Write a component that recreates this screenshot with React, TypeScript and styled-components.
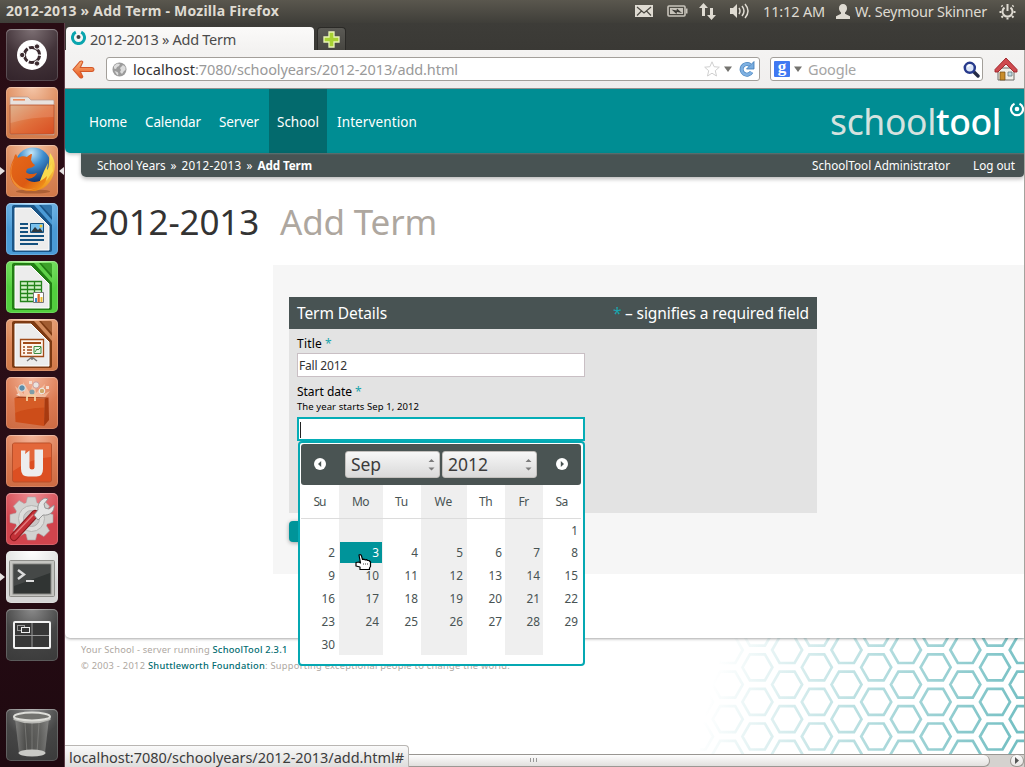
import React, { useLayoutEffect, useRef, useState } from "react";
import styled, { createGlobalStyle } from "styled-components";

const GlobalStyle = createGlobalStyle`
  * { box-sizing: border-box; }
  html, body { margin: 0; padding: 0; overflow: hidden; }
  body { font-family: "Noto Sans", "Open Sans", sans-serif; color: #3c3c3c; background: #fff; }
  svg { display: block; flex: none; }
`;

/* ---------- text that is tracked to a known measure ---------- */

const Measure = styled.span<{ $w: number; $size?: number; $weight?: number; $color?: string }>`
  display: inline-block;
  flex: none;
  width: ${(p) => p.$w}px;
  white-space: pre;
  ${(p) => p.$size && `font-size: ${p.$size}px;`}
  ${(p) => p.$weight && `font-weight: ${p.$weight};`}
  ${(p) => p.$color && `color: ${p.$color};`}
`;

type FitProps = { w: number; size?: number; weight?: number; color?: string; children: string };

function Fit({ w, size, weight, color, children }: FitProps) {
  const ref = useRef<HTMLSpanElement>(null);
  const [tracking, setTracking] = useState(0);
  useLayoutEffect(() => {
    const el = ref.current;
    if (!el) return;
    const natural = el.getBoundingClientRect().width;
    setTracking((t) => t + (w - natural) / Math.max(1, children.length));
  }, [w, children]);
  return (
    <Measure $w={w} $size={size} $weight={weight} $color={color}>
      <span ref={ref} style={{ letterSpacing: tracking }}>{children}</span>
    </Measure>
  );
}

/* ---------- desktop shell ---------- */

const Desktop = styled.div`
  width: 1025px;
  height: 767px;
  display: grid;
  grid-template: 23px 744px / 65px 960px;
  overflow: hidden;
`;

const TopPanel = styled.header`
  grid-column: 1 / 3;
  display: flex;
  align-items: flex-start;
  justify-content: space-between;
  padding: 0 9px 0 6px;
  background: linear-gradient(#5a574e, #3f3e39);
  color: #dfdbd2;
  font-size: 14.5px;
  line-height: 22px;
`;

const Indicators = styled.div`
  display: flex;
  align-items: center;
  height: 22px;
`;

const Gap = styled.span<{ $w: number }>`
  flex: none;
  width: ${(p) => p.$w}px;
`;

const Launcher = styled.aside`
  position: relative;
  display: flex;
  flex-direction: column;
  gap: 6px;
  padding: 6px 0 6px 6px;
  background: linear-gradient(#290c14, #2b0e17 45%, #1f0910);
  border-right: 1px solid #5f3f4a;
`;

const Tile = styled.div<{ $bg: string; $last?: boolean }>`
  position: relative;
  flex: none;
  width: 52px;
  height: 52px;
  border-radius: 5px;
  background: ${(p) => p.$bg};
  box-shadow: inset 0 0 0 1px rgba(255, 255, 255, 0.16), inset 0 1px 1px rgba(255, 255, 255, 0.25);
  ${(p) => p.$last && "margin-top: auto;"}
`;

const Pip = styled.i<{ $side: "left" | "right" }>`
  position: absolute;
  top: 22px;
  ${(p) => (p.$side === "left" ? "left: -6px; border-left: 5px solid #e6e1e1;" : "right: -6px; border-right: 5px solid #e6e1e1;")}
  border-top: 4px solid transparent;
  border-bottom: 4px solid transparent;
`;

/* ---------- firefox window ---------- */

const Window = styled.main`
  position: relative;
  display: flex;
  flex-direction: column;
  height: 744px;
  border-right: 1px solid #a5a29d;
`;

const TabStrip = styled.div`
  height: 27px;
  flex: none;
  display: flex;
  align-items: flex-end;
  gap: 3px;
  padding-left: 1px;
  margin-right: -1px;
  background: linear-gradient(#3d3c38, #3a3935);
`;

const Tab = styled.div`
  display: flex;
  align-items: flex-start;
  gap: 4px;
  width: 248px;
  height: 23px;
  padding: 3px 0 0 5px;
  border-radius: 4px 4px 0 0;
  background: linear-gradient(#fbfaf9, #f3f2f1);
  color: #4b4b4b;
  font-size: 14.5px;
  line-height: 18px;
`;

const NewTab = styled.div`
  display: grid;
  place-items: center;
  width: 29px;
  height: 23px;
  border: 1px solid #2b2a27;
  border-bottom: 0;
  border-radius: 4px 4px 0 0;
  background: linear-gradient(#5b5a55, #474641);
`;

const NavBar = styled.div`
  height: 39px;
  flex: none;
  display: flex;
  align-items: center;
  padding: 0 6px 0 7px;
  border-bottom: 1px solid #95928f;
  background: linear-gradient(#f4f3f2, #f0eeed);
`;

const AddressField = styled.div<{ $w: number; $ml: number; $pl: number }>`
  display: flex;
  align-items: center;
  flex: none;
  width: ${(p) => p.$w}px;
  height: 24px;
  margin-left: ${(p) => p.$ml}px;
  padding-left: ${(p) => p.$pl}px;
  border: 1px solid #a39f9a;
  border-radius: 3px;
  background: #fff;
  font-size: 14.5px;
  line-height: 22px;
`;

/* ---------- schooltool page ---------- */

const Viewport = styled.div`
  flex: 1;
  display: flex;
  flex-direction: column;
  background: #fff;
  overflow: hidden;
`;

const Sheet = styled.div`
  position: relative;
  z-index: 1;
  height: 549px;
  flex: none;
  background: #fff;
  border-bottom-left-radius: 5px;
  box-shadow: 0 1px 3px rgba(0, 0, 0, 0.35);
`;

const Masthead = styled.div`
  position: relative;
  height: 64px;
  display: flex;
  justify-content: space-between;
  padding-left: 16px;
  background: #008d93;
  border-bottom-left-radius: 5px;
  box-shadow: 0 1px 4px rgba(0, 0, 0, 0.3);
`;

const MainNav = styled.nav`
  display: flex;
  gap: 2px;
`;

const NavItem = styled.a<{ $active?: boolean }>`
  padding: 22px 8px 0;
  color: #fff;
  font-size: 13.5px;
  line-height: 22px;
  background: ${(p) => (p.$active ? "#036a6d" : "transparent")};
`;

const Brand = styled.div`
  display: flex;
  width: 194px;
  padding-top: 8px;
  font-size: 35.5px;
  line-height: 48px;
  overflow: hidden;
`;

const BrandMark = styled.svg`
  margin: 4px 0 0 8px;
`;

const Crumbs = styled.div`
  position: relative;
  height: 24px;
  margin-left: 16px;
  display: flex;
  justify-content: space-between;
  padding: 0 9px 0 16px;
  border-radius: 0 0 4px 5px;
  background: linear-gradient(#5c7676, #485353 2px);
  box-shadow: 0 2px 4px rgba(0, 0, 0, 0.28);
  color: #fff;
  font-size: 11.7px;
  line-height: 24px;
`;

const CrumbGroup = styled.div<{ $gap: number }>`
  display: flex;
  gap: ${(p) => p.$gap}px;
`;

const PageTitle = styled.h1`
  display: flex;
  gap: 21px;
  height: 88px;
  margin: 0;
  padding: 21px 0 0 24px;
  font-size: 35px;
  line-height: 48px;
  font-weight: 400;
`;

const FormArea = styled.section`
  height: 309px;
  margin-left: 208px;
  padding: 32px 16px 0;
  background: #f6f6f6;
`;

const Fieldset = styled.div`
  width: 528px;
  height: 216px;
  background: #e3e3e3;
`;

const Legend = styled.div`
  display: flex;
  justify-content: space-between;
  height: 32px;
  padding: 0 8px;
  background: #485353;
  color: #fff;
  font-size: 15.5px;
  line-height: 32px;
`;

const FieldBody = styled.div`
  padding: 5px 8px 0;
`;

const FieldLabel = styled.div<{ $mt?: number }>`
  display: flex;
  gap: 3px;
  height: 19px;
  margin-top: ${(p) => p.$mt ?? 0}px;
  color: #000;
  font-size: 12px;
  line-height: 20px;
`;

const Hint = styled.div`
  height: 16px;
  color: #000;
  font-size: 9.5px;
  line-height: 12px;
`;

const Input = styled.div<{ $focus?: boolean }>`
  position: relative;
  display: flex;
  width: 288px;
  height: 24px;
  padding-left: 1px;
  border: ${(p) => (p.$focus ? "2px solid #05adb6" : "1px solid #c9bfc4")};
  background: #fff;
  color: #333;
  font-size: 12px;
  line-height: 23px;
`;

const Caret = styled.span`
  width: 1px;
  height: 16px;
  margin-top: 3px;
  background: #222;
`;

const SubmitButton = styled.div`
  width: 60px;
  height: 21px;
  margin-top: 8px;
  border-radius: 4px;
  background: #009499;
  box-shadow: 0 1px 4px rgba(0, 0, 0, 0.35);
`;

/* ---------- date picker ---------- */

const Picker = styled.div`
  position: absolute;
  z-index: 5;
  top: 22px;
  left: -1px;
  width: 287px;
  height: 225px;
  padding: 1px;
  border: 2px solid #05a8b2;
  border-radius: 4px;
  background: #fff;
  color: #485353;
`;

const PickerHead = styled.div`
  display: flex;
  align-items: center;
  width: 280px;
  height: 41px;
  padding: 0 13px 1px;
  border-radius: 3px;
  background: #4a5453;
`;

const Select = styled.div`
  display: flex;
  align-items: center;
  justify-content: space-between;
  width: 95px;
  height: 27px;
  padding: 0 4px 0 5px;
  border: 1px solid #c3c0bd;
  border-radius: 3px;
  background: linear-gradient(#f7f7f7, #d9d9d9);
  color: #3c3c3c;
  font-size: 17.5px;
  line-height: 25px;
`;

const Grid = styled.div`
  display: grid;
  grid-template-columns: 38px 44px 38px 46px 38px 38px 38px;
  grid-template-rows: 34px 22px 23px 23px 23px 23px 22px;
  width: 280px;
`;

const DayName = styled.div<{ $alt: boolean }>`
  border-bottom: 1px solid #dcdcdc;
  background: ${(p) => (p.$alt ? "#efefef" : "transparent")};
  text-align: center;
  font-size: 12px;
  line-height: 33px;
  padding-right: 1px;
`;

const Day = styled.div<{ $alt: boolean; $on: boolean; $end: number }>`
  padding-right: ${(p) => (p.$on ? 3 : p.$end)}px;
  background: ${(p) => (p.$on ? "#00949a" : p.$alt ? "#efefef" : "transparent")};
  border: solid #efefef;
  border-width: ${(p) => (p.$on ? "1px" : "0")};
  color: ${(p) => (p.$on ? "#fff" : "#485353")};
  text-align: right;
  font-size: 11.8px;
  line-height: ${(p) => (p.$on ? 21 : 23)}px;
`;

const Pointer = styled.svg`
  position: absolute;
  z-index: 8;
  left: 290px;
  top: 530px;
`;

/* ---------- footer ---------- */

const Footer = styled.footer`
  flex: none;
  height: 116px;
  display: flex;
  justify-content: space-between;
  padding-left: 16px;
  color: #aea79f;
  font-size: 9.3px;
  line-height: 16px;
`;

const Credits = styled.div`
  padding-top: 4px;
`;

const CreditLine = styled.div`
  display: flex;
  height: 16px;
`;

const ScrollBar = styled.div`
  display: flex;
  height: 13px;
  flex: none;
  border-top: 1px solid #999692;
  background: #d5d2cf;
`;

const Thumb = styled.div`
  display: grid;
  place-items: center;
  width: 925px;
  padding-left: 12px;
  border: 1px solid #9c9894;
  border-top: 0;
  border-radius: 0 7px 7px 0;
  background: linear-gradient(#fdfdfd, #e2e0de);
`;

const ScrollArrow = styled.div`
  display: grid;
  place-items: center;
  width: 14px;
  margin-left: auto;
  border: 1px solid #9c9894;
  border-top: 0;
  border-radius: 7px;
  background: linear-gradient(#fbfbfb, #e6e4e2);
`;

const StatusTip = styled.div`
  position: absolute;
  z-index: 9;
  left: 0;
  bottom: 0;
  width: 344px;
  height: 22px;
  padding-left: 4px;
  border: 1px solid #b9b6b3;
  border-width: 1px 1px 0 0;
  border-radius: 0 4px 0 0;
  background: linear-gradient(#fafafa, #dedddc);
  color: #3c3c3c;
  font-size: 14.5px;
  line-height: 22px;
`;

/* ---------- data ---------- */

const NAV: [string, number][] = [["Home", 38], ["Calendar", 56], ["Server", 40], ["School", 42], ["Intervention", 80]];
const DAYS: [string, number][] = [["Su", 12], ["Mo", 17], ["Tu", 13], ["We", 18], ["Th", 13], ["Fr", 10], ["Sa", 12]];
const CELLS = Array.from({ length: 42 }, (_, i) => (i >= 6 && i < 36 ? i - 5 : 0));
const DAY_ENDS = [4, 4, 3, 4, 3, 3, 3];

/* ---------- drawings ---------- */

const orange = "radial-gradient(circle at 50% 0, #f4c6a8, #dc8758 55%, #cf7747)";

const DashIcon = () => (
  <svg width="52" height="52" viewBox="0 0 52 52">
    <circle cx="26" cy="26" r="15" fill="#fff" />
    <circle cx="26" cy="26" r="7.6" fill="none" stroke="#3c2b30" strokeWidth="3" strokeDasharray="14.3 1.6" strokeDashoffset="-.8" />
    <g fill="#3c2b30" stroke="#fff" strokeWidth="1">
      <circle cx="16.2" cy="26" r="2.7" />
      <circle cx="31" cy="17.5" r="2.7" />
      <circle cx="31" cy="34.5" r="2.7" />
    </g>
  </svg>
);

const FilesIcon = () => (
  <svg width="52" height="52" viewBox="0 0 52 52">
    <defs>
      <linearGradient id="fold" x1="0" y1="0" x2="1" y2="1">
        <stop offset="0" stopColor="#d9a67c" /><stop offset=".5" stopColor="#e0703c" /><stop offset="1" stopColor="#d94e22" />
      </linearGradient>
    </defs>
    <path d="M4 47V11q0-1 1-1h17l3 3h22q1 0 1 1v34z" fill="#e8e2de" stroke="#b8968a" strokeWidth=".7" />
    <path d="M7 12h12v1.6H7z" fill="#e98a5b" />
    <path d="M4 18h44v28q0 1-1 1H5q-1 0-1-1z" fill="url(#fold)" stroke="#b8502c" strokeWidth=".8" />
    <path d="M4.500 18.500h43V30Q24 30 4.500 36z" fill="#fff" opacity=".14" />
  </svg>
);

const FirefoxIcon = () => (
  <svg width="52" height="52" viewBox="0 0 52 52">
    <defs>
      <radialGradient id="sea" cx=".45" cy=".15" r=".85">
        <stop offset="0" stopColor="#c3e6f8" /><stop offset=".4" stopColor="#3f8fd0" /><stop offset="1" stopColor="#0c2d6c" />
      </radialGradient>
      <linearGradient id="fur" x1="0" y1="0" x2="1" y2="1">
        <stop offset="0" stopColor="#e66a1c" /><stop offset=".6" stopColor="#dc5a12" /><stop offset="1" stopColor="#f7a61c" />
      </linearGradient>
      <linearGradient id="tail" x1="0" y1="0" x2="0" y2="1">
        <stop offset="0" stopColor="#fbe75c" /><stop offset="1" stopColor="#ef8f17" />
      </linearGradient>
    </defs>
    <ellipse cx="27" cy="46.500" rx="17" ry="2" fill="#85431d" opacity=".5" />
    <circle cx="27" cy="20.500" r="18" fill="url(#sea)" />
    <path d="M44 8c4 5 6 12 4 19-2 11-11 19-22 19l-1-6c8-1 15-7 17-15 1-5 1-11 2-17z" fill="url(#tail)" />
    <path d="M46 18l-5 7 1-7-4 8-5 12 8-3 6-9z" fill="#f9d94c" />
    <path d="M8 13c0-2 1-3 2-4l2 4c3-2 6-2 9-1 1-1 3-3 5-3l-1 6c1 2 2 4 4 5-1 2-5 3-8 4l-1 3c2 3 8 2 11 1-2 4-7 7-12 5 6 6 16 5 22-2-1 9-8 15-17 15C11 46 4 37 4 28c0-6 2-11 4-15z" fill="url(#fur)" />
    <path d="M8 16c-4 8-4 17 3 23 5 5 13 6 19 4-9 5-19 2-23-6-4-7-3-15 1-21z" fill="#f6a442" opacity=".7" />
  </svg>
);

type OfficeProps = { dark: string; mid: string; children: React.ReactNode };
const OfficeIcon = ({ dark, mid, children }: OfficeProps) => (
  <svg width="52" height="52" viewBox="0 0 52 52">
    <path d="M8 2h36q2 0 2 2v43q0 2-2 2H8q-2 0-2-2V4q0-2 2-2z" fill={dark} />
    <path d="M28 2h5l13 15v5z" fill={mid} />
    <path d="M35 2h9q2 0 2 2v10z" fill={mid} opacity=".45" />
    <path d="M9 5h16l18 18v24H9z" fill="#ececec" stroke="#fff" strokeWidth="1" />
    {children}
  </svg>
);

const WriterArt = () => (
  <g>
    <path d="M14 21h8M14 25h8M14 29h8M14 33h24M14 37h24M14 41h18" stroke="#15517f" strokeWidth="1.8" />
    <path d="M24.500 20.500h13v9h-13z" fill="#7ac1ee" stroke="#15517f" />
    <path d="M25 29l4-5 3 3 2-2 3 4z" fill="#30383d" /><circle cx="35" cy="23" r="1.500" fill="#f0c838" />
  </g>
);

const CalcArt = () => (
  <g>
    <path d="M14.500 20.500h21v20h-21zM14.500 24.500h21M14.500 28.500h21M14.500 32.500h21M14.500 36.500h21M21.500 20.500v20M28.500 20.500v20" fill="#d3f0c8" stroke="#23831a" strokeWidth="1.3" />
    <path d="M27.500 31.500h10v10h-10z" fill="#fff" stroke="#777" />
    <path d="M29 37h2v4h-2z" fill="#3a86c8" /><path d="M31.500 33h2.300v8h-2.300z" fill="#d8672a" /><path d="M34.500 36h2v5h-2z" fill="#e7b92c" />
  </g>
);

const ImpressArt = () => (
  <g>
    <path d="M14.500 20.500h23v17h-23z" fill="#fff5ec" stroke="#a04a17" strokeWidth="1.300" />
    <path d="M17 24h18" stroke="#a04a17" strokeWidth="2" />
    <path d="M17 28h2m2 0h5M17 31h2m2 0h5M17 34h2m2 0h5" stroke="#a04a17" strokeWidth="1.700" />
    <path d="M28 27.500h7v7h-7z" fill="#e7f5e3" stroke="#3d8b42" /><path d="M29 33l2-3 1 1 3-3" fill="none" stroke="#3d8b42" />
    <path d="M26 38l-5 4M26 38l5 4M26 38v3" stroke="#777" strokeWidth="1.500" />
  </g>
);

const SoftwareIcon = () => (
  <svg width="52" height="52" viewBox="0 0 52 52">
    <path d="M13 20L9 9l9 8-1-12 7 11 4-13 2 13 9-9-3 11 8-4-7 9z" fill="#ffe1c8" opacity=".55" />
    <circle cx="16" cy="11" r="3.300" fill="#5d8ca8" stroke="#e6e9e8" /><circle cx="30" cy="8" r="3.200" fill="#e9e3df" stroke="#c99" />
    <circle cx="36" cy="14" r="2.800" fill="#cfa96b" stroke="#eee" /><circle cx="26" cy="15" r="2.500" fill="#7f9ea8" />
    <path d="M23 4h3v3h-3zM40 9h3v3h-3zM10 18l3-2 1 3z" fill="#f4ddd0" />
    <path d="M8.500 21l30 .5-.5 27.500L9.500 45z" fill="#cd4d19" /><path d="M38.500 21.500l4-1 .5 22.500-5 6z" fill="#a83a10" />
    <path d="M8.500 21l4-1.500 30 1-4 1z" fill="#a8431c" />
    <path d="M8.500 21l30 .5-.2 9Q20 31 9 36z" fill="#f08b50" opacity=".25" />
    <path d="M21 24v-4q0-1.500 1.500-1.500h5q1.500 0 1.500 1.500v4" fill="none" stroke="#f3cf9f" strokeWidth="1.800" />
  </svg>
);

const UbuntuOneIcon = () => (
  <svg width="52" height="52" viewBox="0 0 52 52">
    <rect x="6.500" y="8" width="39" height="39" rx="2" fill="#dc4f22" stroke="#b9502b" />
    <path d="M7 8.500h38V22Q25 23 7 36z" fill="#f19468" opacity=".35" />
    <path d="M15 15.500h4.500l-.5 3.500 4.500-3.500v17q0 2 2.500 2t2.500-2V14.500H37V34q0 7.500-6.500 7.500H22q-7 0-7-7.500z" fill="#ededed" />
  </svg>
);

const SettingsIcon = () => (
  <svg width="52" height="52" viewBox="0 0 52 52">
    <g fill="#d2d2d0" stroke="#a9a6a6" strokeWidth=".6">
      {[0, 45, 90, 135].map((a) => (
        <path key={a} d="M21.500 4h8l1.500 6v31l-1.500 6h-8L20 41V10z" transform={`rotate(${a} 25.500 25.500)`} />
      ))}
    </g>
    <circle cx="25.500" cy="25.500" r="16.500" fill="#d2d2d0" />
    <circle cx="25.500" cy="25.500" r="13" fill="#dededc" stroke="#b5b5b3" />
    <circle cx="25.500" cy="25.500" r="8" fill="#c9c6c5" stroke="#b0aeae" />
    <path d="M8 44L29 21" stroke="#8c181d" strokeWidth="8" strokeLinecap="round" />
    <path d="M8 44L29 21" stroke="#c33037" strokeWidth="6" strokeLinecap="round" />
    <path d="M9 41L27 22" stroke="#e47a7c" strokeWidth="1.400" strokeLinecap="round" />
    <path d="M28 22l4-5c-1-5 2-10 7-12l3 1-4 5 1 4 4 1 5-4c1 6-4 11-11 10l-5 5z" fill="#e4e4e4" stroke="#8f8f8f" strokeWidth=".9" />
  </svg>
);

const TerminalIcon = () => (
  <svg width="52" height="52" viewBox="0 0 52 52">
    <rect x="3.500" y="9.500" width="45" height="36" rx="1" fill="#c4c4c0" stroke="#8e8e8a" />
    <rect x="7" y="13" width="38" height="30" fill="#303433" stroke="#8a8a87" />
    <path d="M8 14h36v8L8 35z" fill="#fff" opacity=".1" />
    <path d="M12 19l6 4.500-6 4.500" fill="none" stroke="#dcdcdc" strokeWidth="2.400" /><path d="M20 30h8" stroke="#dcdcdc" strokeWidth="2" />
  </svg>
);

const WorkspacesIcon = () => (
  <svg width="52" height="52" viewBox="0 0 52 52">
    <rect x="8" y="13" width="36" height="26" rx="1" fill="#373737" stroke="#f2f2f2" strokeWidth="2" />
    <path d="M26 14v24M9 26.500h34" stroke="#9a9a9a" />
    <rect x="11.500" y="16.500" width="7" height="5" fill="none" stroke="#999" />
    <rect x="15.500" y="18.500" width="8" height="5" fill="#373737" stroke="#eee" />
  </svg>
);

const TrashIcon = () => (
  <svg width="52" height="52" viewBox="0 0 52 52">
    <defs>
      <linearGradient id="can"><stop offset="0" stopColor="#8d8d8b" /><stop offset=".3" stopColor="#52524f" /><stop offset=".75" stopColor="#696966" /><stop offset="1" stopColor="#91918f" /></linearGradient>
    </defs>
    <path d="M9 9l4 35q13 6 26 0l4-35z" fill="url(#can)" opacity=".75" />
    <path d="M19 14l2 30M26 14v31M33 14l-2 30" stroke="#8b8b88" strokeWidth=".6" />
    <ellipse cx="26" cy="44" rx="13.500" ry="3.500" fill="#c9c9c5" />
    <path d="M7.500 8v3q18.500 7 37 0V8z" fill="#b9b9b5" />
    <ellipse cx="26" cy="7.500" rx="18" ry="4" fill="#73736f" stroke="#deded9" strokeWidth="2" />
  </svg>
);

const MailIcon = () => (
  <svg width="18" height="14" viewBox="0 0 18 14">
    <path d="M0 1h18v12H0z" fill="#dfdbd2" />
    <path d="M2 3l7 6 7-6M2 11.500L6.500 7M16 11.500L11.500 7" fill="none" stroke="#4a4841" strokeWidth="1.200" />
  </svg>
);
const BatteryIcon = () => (
  <svg width="21" height="14" viewBox="0 0 21 14">
    <rect x="1" y="2" width="17" height="10" rx="1" fill="none" stroke="#c7c3ba" strokeWidth="1.600" />
    <path d="M3 4h13v6H3z" fill="#c7c3ba" /><path d="M19 4.500h1.500v5H19z" fill="#c7c3ba" />
    <path d="M4.500 5.500l5 1 .5-2 5 4.500-5-1-.5 2z" fill="#3d3c37" />
  </svg>
);
const NetworkIcon = () => (
  <svg width="17" height="17" viewBox="0 0 17 17" fill="#dfdbd2">
    <path d="M4.500 0L9 5H6v8H3V5H0zM12.500 17L8 12h3V5h3v7h3z" />
  </svg>
);
const VolumeIcon = () => (
  <svg width="20" height="16" viewBox="0 0 20 16" fill="#dfdbd2">
    <path d="M0 5h3l4-4v14l-4-4H0z" />
    <path d="M9 5q2 3 0 6M12 3q4 5 0 10M15 1q6 7 0 14" fill="none" stroke="#dfdbd2" strokeWidth="1.500" />
  </svg>
);
const PersonIcon = () => (
  <svg width="14" height="15" viewBox="0 0 14 15">
    <path d="M7 0c2.500 0 4 1.800 4 4.200 0 2-1 3.300-2 4.300v1.300l5 2.500V15H0v-2.700l5-2.500V8.500C4 7.500 3 6.200 3 4.200 3 1.800 4.500 0 7 0z" fill="#dfdbd2" />
  </svg>
);
const GearIcon = () => (
  <svg width="17" height="17" viewBox="0 0 17 17" fill="none" stroke="#dfdbd2">
    <path d="M5.500 4.600a5 5 0 1 0 6 0" strokeWidth="2" /><path d="M8.500 1v7" strokeWidth="2" />
    <path d="M3.500 3.500L2.500 2.500M13.500 3.500l1-1M2.500 9H.5M14.500 9h2M4 13l-1.500 1.500M13 13l1.500 1.500M8.500 14.500v2" strokeWidth="2" />
  </svg>
);

const Favicon = () => (
  <svg width="15" height="15" viewBox="0 0 15 15">
    <path d="M4.800 2.200a6 6 0 1 0 5.400 0" fill="none" stroke="#0aa5ae" strokeWidth="3" />
    <circle cx="7.500" cy="7" r="2" fill="#444" />
  </svg>
);
const PlusIcon = () => (
  <svg width="17" height="17" viewBox="0 0 17 17">
    <path d="M6 1h5v5h5v5h-5v5H6v-5H1V6h5z" fill="#a8d233" stroke="#e9f5b5" strokeWidth="1.300" />
  </svg>
);
const BackIcon = () => (
  <svg width="23" height="19" viewBox="0 0 23 19">
    <defs><linearGradient id="bk" x1="0" y1="0" x2="0" y2="1"><stop offset="0" stopColor="#f9b47c" /><stop offset="1" stopColor="#e8561c" /></linearGradient></defs>
    <path d="M1 9.500L8 1.500q2-1.200 2.800.5L8.300 7.500H20q2 .2 2 2t-2 2H8.300l2.500 5.300Q10 18.800 8 17.500z" fill="url(#bk)" stroke="#d4582a" strokeWidth="1.100" />
  </svg>
);
const GlobeIcon = () => (
  <svg width="15" height="15" viewBox="0 0 15 15">
    <circle cx="7.500" cy="7.500" r="7" fill="#9b9b9b" />
    <path d="M2 4l3-2.500 3 .5-1 2-2 1-1 2-2-.5zM8 6l3-3 2.500 2v3L12 9l-2 3-2-2 1-2zM2.500 9l3 1 1 2-1 1.500z" fill="#dcdcdc" />
  </svg>
);
const StarIcon = () => (
  <svg width="16" height="16" viewBox="0 0 16 16">
    <path d="M8 .8l2.100 4.900 5.200.5-4 3.500 1.200 5.300L8 12.200 3.500 15l1.200-5.300-4-3.500 5.200-.5z" fill="#fff" stroke="#d0d0d0" />
  </svg>
);
const DownArrow = () => (
  <svg width="8" height="6" viewBox="0 0 8 6"><path d="M0 .5h8L4 6z" fill="#74736f" /></svg>
);
const ReloadIcon = () => (
  <svg width="17" height="16" viewBox="0 0 17 16">
    <path d="M12 4A5.300 5.300 0 1 0 13.500 11" fill="none" stroke="#4c86bf" strokeWidth="4" />
    <path d="M12 4A5.300 5.300 0 1 0 13.500 11" fill="none" stroke="#7fb1e2" strokeWidth="2.600" />
    <path d="M16 .5v7.500H8.500z" fill="#79ade0" stroke="#3c79b5" strokeWidth=".8" />
  </svg>
);
const GoogleBox = styled.span`
  width: 16px;
  height: 16px;
  border-radius: 1px;
  background: #4079f2;
  color: #fff;
  font: 700 17px/12px "Liberation Serif", serif;
  text-align: center;
`;
const SearchIcon = () => (
  <svg width="17" height="17" viewBox="0 0 17 17">
    <path d="M10.500 10.500l4.500 4.500" stroke="#252b45" strokeWidth="3.400" strokeLinecap="round" />
    <circle cx="6.800" cy="6.800" r="5" fill="#dbe5f7" stroke="#273a8c" strokeWidth="2.500" />
    <path d="M4.500 6a3 3 0 0 1 3-2" fill="none" stroke="#fff" strokeWidth="1.300" />
  </svg>
);
const HomeIcon = () => (
  <svg width="24" height="24" viewBox="0 0 24 24">
    <path d="M4 11h16v12H4z" fill="#f1efe9" stroke="#6f6d68" />
    <path d="M12 1L1 12.500V15h3l8-8 8 8h3v-2.500z" fill="#cf4a4f" stroke="#9c2027" strokeWidth=".9" />
    <path d="M6 15h5v8H6z" fill="#c88d2b" stroke="#714a12" strokeWidth=".7" /><path d="M14 15h4v4h-4z" fill="#bdd9e3" stroke="#68787c" strokeWidth=".8" />
  </svg>
);

const CircleArrow = ({ flip }: { flip?: boolean }) => (
  <svg width="12" height="12" viewBox="0 0 12 12">
    <circle cx="6" cy="6" r="6" fill="#fff" />
    <path d={flip ? "M4.800 3v6L8 6z" : "M7.200 3v6L4 6z"} fill="#4a5453" />
  </svg>
);
const Spinner = () => (
  <svg width="7" height="13" viewBox="0 0 7 13" fill="#7b7b7b"><path d="M3.500 1L6.500 4h-6zM3.500 12.500l-3-3h6z" /></svg>
);

function Honeycomb() {
  const cells: string[] = [];
  for (let c = -2; c <= 9; c++) {
    for (let r = -1; r <= 4; r++) {
      const x = 57.400 + c * 29.700;
      const y = 29.300 + r * 34.600 + (c % 2 ? -17.300 : 0);
      cells.push(`M${x - 15} ${y}l7.500 -13h15l7.500 13l-7.500 13h-15z`);
    }
  }
  return (
    <svg width="324" height="116" viewBox="0 0 324 116">
      <defs>
        <linearGradient id="fade" gradientUnits="userSpaceOnUse" x1="12" y1="45" x2="330" y2="125">
          <stop offset="0" stopColor="#1c979d" stopOpacity="0" />
          <stop offset=".35" stopColor="#1c979d" stopOpacity=".24" />
          <stop offset="1" stopColor="#1c979d" stopOpacity=".65" />
        </linearGradient>
      </defs>
      <path d={cells.join("")} fill="none" stroke="url(#fade)" strokeWidth="2.700" />
    </svg>
  );
}

/* ---------- page ---------- */

function DatePicker() {
  return (
    <Picker>
      <PickerHead>
        <CircleArrow />
        <Gap $w={19} />
        <Select><Fit w={30}>Sep</Fit><Spinner /></Select>
        <Gap $w={2} />
        <Select><Fit w={40}>2012</Fit><Spinner /></Select>
        <Gap $w={19} />
        <CircleArrow flip />
      </PickerHead>
      <Grid>
        {DAYS.map(([d, w], i) => <DayName key={d} $alt={i % 2 === 1 && i < 6}><Fit w={w}>{d}</Fit></DayName>)}
        {CELLS.map((n, i) => (
          <Day key={i} $alt={i % 7 % 2 === 1} $on={n === 3} $end={DAY_ENDS[i % 7]}>
            {n ? <Fit w={n > 9 ? 13.600 : 6.800}>{String(n)}</Fit> : null}
          </Day>
        ))}
      </Grid>
    </Picker>
  );
}

export default function App() {
  return (
    <Desktop>
      <GlobalStyle />
      <TopPanel>
        <Fit w={273} size={14} weight={700}>2012-2013 » Add Term - Mozilla Firefox</Fit>
        <Indicators>
          <MailIcon /><Gap $w={14} /><BatteryIcon /><Gap $w={11} /><NetworkIcon /><Gap $w={14} /><VolumeIcon />
          <Gap $w={13} /><Fit w={62}>11:12 AM</Fit><Gap $w={11} /><PersonIcon /><Gap $w={5} />
          <Fit w={132}>W. Seymour Skinner</Fit><Gap $w={12} /><GearIcon />
        </Indicators>
      </TopPanel>

      <Launcher>
        <Tile $bg="radial-gradient(circle at 50% 0, #7d7074, #43343a 50%, #32232a)"><DashIcon /></Tile>
        <Tile $bg={orange}><FilesIcon /></Tile>
        <Tile $bg={orange}><FirefoxIcon /><Pip $side="left" /><Pip $side="right" /></Tile>
        <Tile $bg="radial-gradient(circle at 50% 0, #9fd2f5, #4a9ad6 60%)"><OfficeIcon dark="#1a5486" mid="#4b9bd6"><WriterArt /></OfficeIcon></Tile>
        <Tile $bg="radial-gradient(circle at 50% 0, #a5f58c, #52cf3e 60%)"><OfficeIcon dark="#217d13" mid="#5fd148"><CalcArt /></OfficeIcon></Tile>
        <Tile $bg={orange}><OfficeIcon dark="#7d3a12" mid="#d18a5c"><ImpressArt /></OfficeIcon></Tile>
        <Tile $bg="radial-gradient(circle at 50% 0, #f5b79c, #db7a52 55%, #cc6a42)"><SoftwareIcon /></Tile>
        <Tile $bg="radial-gradient(circle at 50% 0, #f5b79c, #db7a52 55%, #cc6a42)"><UbuntuOneIcon /></Tile>
        <Tile $bg="radial-gradient(circle at 50% 0, #ee8c92, #d1444d 60%)"><SettingsIcon /></Tile>
        <Tile $bg="radial-gradient(circle at 50% 0, #fff, #d5d5d5 70%)"><TerminalIcon /><Pip $side="left" /></Tile>
        <Tile $bg="radial-gradient(circle at 50% 0, #8a8a8a, #464646 50%, #3a3a3a)"><WorkspacesIcon /></Tile>
        <Tile $last $bg="radial-gradient(circle at 50% 0, #8a8a8a, #464646 50%, #3a3a3a)"><TrashIcon /></Tile>
      </Launcher>

      <Window>
        <TabStrip>
          <Tab><Favicon /><Fit w={146}>2012-2013 » Add Term</Fit></Tab>
          <NewTab><PlusIcon /></NewTab>
        </TabStrip>
        <NavBar>
          <BackIcon />
          <AddressField $w={654} $ml={11} $pl={5}>
            <GlobeIcon /><Gap $w={6} />
            <Fit w={62} color="#333">localhost</Fit><Fit w={263} color="#999">:7080/schoolyears/2012-2013/add.html</Fit>
            <Gap $w={246} /><StarIcon /><Gap $w={4} /><DownArrow /><Gap $w={6} /><ReloadIcon />
          </AddressField>
          <AddressField $w={213} $ml={10} $pl={3}>
            <GoogleBox>g</GoogleBox><Gap $w={4} /><DownArrow /><Gap $w={6} />
            <Fit w={48} color="#a5a5a5">Google</Fit><Gap $w={107} /><SearchIcon />
          </AddressField>
          <Gap $w={11} /><HomeIcon />
        </NavBar>

        <Viewport>
          <Sheet>
            <Masthead>
              <MainNav>
                {NAV.map(([label, w]) => <NavItem key={label} $active={label === "School"}><Fit w={w}>{label}</Fit></NavItem>)}
              </MainNav>
              <Brand>
                <Fit w={106} weight={400} color="#d5e2df">school</Fit><Fit w={65} weight={500} color="#fff">tool</Fit>
                <BrandMark width="16" height="16" viewBox="0 0 16 16">
                  <path d="M5.500 2.700a6 6 0 1 0 5 0" fill="none" stroke="#fff" strokeWidth="2.200" /><circle cx="8" cy="8" r="2.300" fill="#fff" />
                </BrandMark>
              </Brand>
            </Masthead>
            <Crumbs>
              <CrumbGroup $gap={5}>
                <Fit w={68.500}>School Years</Fit><Fit w={6}>»</Fit><Fit w={60}>2012-2013</Fit><Fit w={6}>»</Fit><Fit w={54.500} weight={700}>Add Term</Fit>
              </CrumbGroup>
              <CrumbGroup $gap={23}><Fit w={138}>SchoolTool Administrator</Fit><Fit w={42}>Log out</Fit></CrumbGroup>
            </Crumbs>
            <PageTitle><Fit w={170} color="#333">2012-2013</Fit><Fit w={157} color="#aea79f">Add Term</Fit></PageTitle>
            <FormArea>
              <Fieldset>
                <Legend>
                  <Fit w={90}>Term Details</Fit>
                  <span><Fit w={12} color="#19a5ad">* </Fit><Fit w={184}>– signifies a required field</Fit></span>
                </Legend>
                <FieldBody>
                  <FieldLabel><Fit w={25}>Title</Fit><Fit w={6} color="#19a5ad">*</Fit></FieldLabel>
                  <Input><Fit w={48}>Fall 2012</Fit></Input>
                  <FieldLabel $mt={5}><Fit w={55}>Start date</Fit><Fit w={6} color="#19a5ad">*</Fit></FieldLabel>
                  <Hint><Fit w={122}>The year starts Sep 1, 2012</Fit></Hint>
                  <Input $focus><Caret /><DatePicker /></Input>
                </FieldBody>
              </Fieldset>
              <SubmitButton />
            </FormArea>
          </Sheet>
          <Footer>
            <Credits>
              <CreditLine><Fit w={131.500}>Your School - server running </Fit><Fit w={75} weight={500} color="#006b70">SchoolTool 2.3.1</Fit></CreditLine>
              <CreditLine><Fit w={67}>© 2003 - 2012 </Fit><Fit w={117} weight={500} color="#006b70">Shuttleworth Foundation</Fit><Fit w={245}>: Supporting exceptional people to change the world.</Fit></CreditLine>
            </Credits>
            <Honeycomb />
          </Footer>
          <ScrollBar>
            <Thumb><svg width="8" height="5" viewBox="0 0 8 5"><path d="M.5 0v4M3.500 0v4M6.500 0v4" stroke="#999" /></svg></Thumb>
            <ScrollArrow><svg width="4" height="7" viewBox="0 0 4 7"><path d="M0 0l4 3.500L0 7z" fill="#555" /></svg></ScrollArrow>
          </ScrollBar>
        </Viewport>

        <StatusTip><Fit w={335}>localhost:7080/schoolyears/2012-2013/add.html#</Fit></StatusTip>
        <Pointer width="18" height="18" viewBox="0 0 18 18">
          <path d="M4 2q1.300-1 2.300.3L7.500 6.500l1.500-.4 1 .8 1.500-.3 1.200.9 1.300 0 1.500 1.500v4.500l-1 1.500v1.500H5V14l-4-1V9.500l3-.5 1.500 1z" fill="#fff" stroke="#000" strokeWidth="1.200" strokeLinejoin="round" />
          <path d="M8.500 10v2M10.500 10v2M12.500 10v2" stroke="#888" strokeWidth=".8" />
        </Pointer>
      </Window>
    </Desktop>
  );
}
